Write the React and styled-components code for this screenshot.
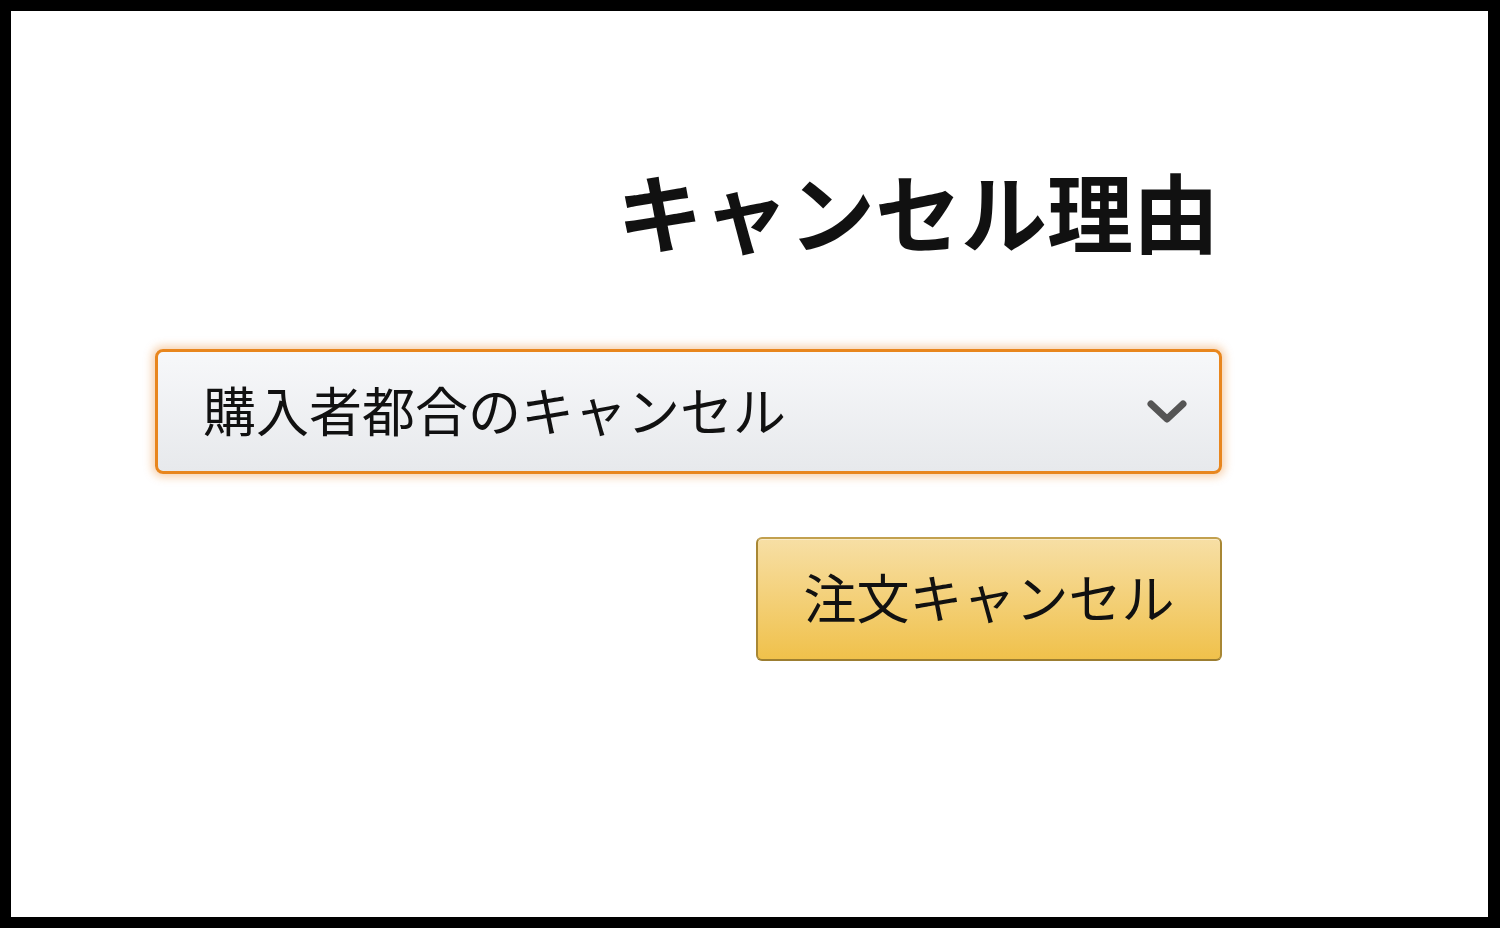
import React from 'react';
import styled, { createGlobalStyle } from 'styled-components';

const GlobalStyle = createGlobalStyle`
  html, body {
    margin: 0;
    padding: 0;
    background: #000;
  }
  * {
    box-sizing: border-box;
  }
`;

const Frame = styled.div`
  width: 1500px;
  height: 928px;
  border-style: solid;
  border-color: #000;
  border-width: 11px 12px 11px 11px;
  background: #fff;
  font-family: "Noto Sans CJK JP", "Noto Sans", sans-serif;
  color: #111;
`;

const Panel = styled.div`
  width: 1067px;
  margin-left: 144px;
  padding-top: 147px;
  display: flex;
  flex-direction: column;
  align-items: flex-end;
`;

const Title = styled.h1`
  margin: 0;
  font-size: 86px;
  font-weight: 700;
  line-height: 1.2;
  letter-spacing: 0;
  margin-right: 3px;
`;

const SelectWrap = styled.div`
  position: relative;
  width: 100%;
  margin-top: 88px;
`;

const Select = styled.select`
  appearance: none;
  width: 100%;
  height: 125px;
  padding: 0 0 6px 45px;
  border: 3px solid #e8861e;
  border-radius: 8px;
  background: linear-gradient(to bottom, #f7f8fa, #e7e9ec);
  box-shadow: 0 0 8px 3px rgba(228, 121, 17, 0.35);
  font-family: inherit;
  font-size: 53px;
  color: #111;
  outline: none;
`;

const Chevron = styled.svg`
  position: absolute;
  right: 34px;
  top: 49px;
  width: 42px;
  height: 28px;
  pointer-events: none;
`;

const Button = styled.button`
  margin-top: 63px;
  width: 466px;
  height: 124px;
  border: 2px solid #a88734;
  border-color: #c2a04e #a88734 #9c7e31;
  border-radius: 6px;
  background: linear-gradient(to bottom, #f7dfa5, #f0c14b);
  box-shadow: inset 0 1px 0 rgba(255, 255, 255, 0.4);
  font-family: inherit;
  font-size: 53px;
  color: #111;
  padding: 0 0 6px;
  cursor: pointer;
`;

export default function App() {
  return (
    <>
      <GlobalStyle />
      <Frame>
        <Panel>
          <Title>キャンセル理由</Title>
          <SelectWrap>
            <Select defaultValue="buyer">
              <option value="buyer">購入者都合のキャンセル</option>
            </Select>
            <Chevron viewBox="0 0 42 28">
              <polyline
                points="5,6 21,21 37,6"
                fill="none"
                stroke="#555"
                strokeWidth="7"
                strokeLinecap="round"
                strokeLinejoin="round"
              />
            </Chevron>
          </SelectWrap>
          <Button>注文キャンセル</Button>
        </Panel>
      </Frame>
    </>
  );
}
